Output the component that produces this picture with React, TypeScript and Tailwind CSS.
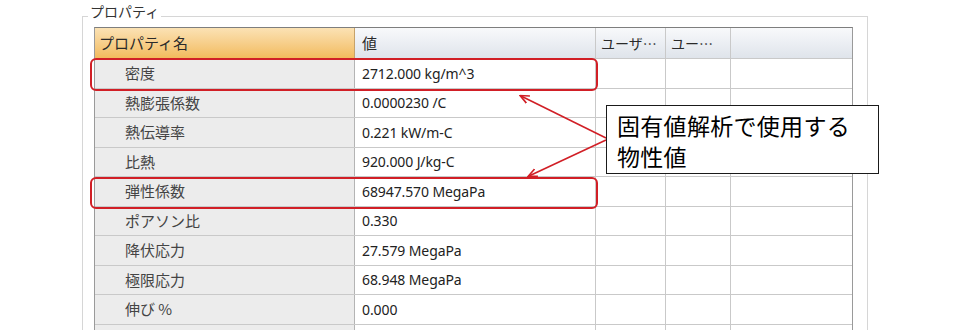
import React from "react";

const jp = "font-['Noto_Sans_CJK_JP','Noto_Sans',sans-serif]";
const num = "font-['Noto_Sans','Noto_Sans_CJK_JP',sans-serif]";

const rows: [string, string][] = [
  ["密度", "2712.000 kg/m^3"],
  ["熱膨張係数", "0.0000230 /C"],
  ["熱伝導率", "0.221 kW/m-C"],
  ["比熱", "920.000 J/kg-C"],
  ["弾性係数", "68947.570 MegaPa"],
  ["ポアソン比", "0.330"],
  ["降伏応力", "27.579 MegaPa"],
  ["極限応力", "68.948 MegaPa"],
  ["伸び %", "0.000"],
  ["", ""],
];

const PropRow = ({ name, value }: { name: string; value: string }) => (
  <div className="flex h-[29.5px] border-b border-[#c9c9c9]">
    <div
      className={`w-[260px] shrink-0 bg-[#ececec] border-r border-[#b4b4b4] pl-[30px] flex items-center text-[15px] text-[#444] ${jp}`}
    >
      {name}
    </div>
    <div
      className={`w-[241px] shrink-0 border-r border-[#c9c9c9] pl-[7px] flex items-center text-[14px] text-[#222] tracking-[-0.1px] ${num}`}
    >
      {value}
    </div>
    <div className="w-[70px] shrink-0 border-r border-[#c9c9c9]" />
    <div className="w-[65px] shrink-0 border-r border-[#c9c9c9]" />
    <div className="flex-1" />
  </div>
);

export default function App() {
  return (
    <div className="relative w-[960px] h-[330px] overflow-hidden bg-white">
      <div className="ml-[82px] mt-[16px] w-[786px] h-[330px] border border-[#d6d6d6] pl-[11px] pt-[10px]">
        <span
          className={`absolute left-[88px] top-[3px] bg-white px-[2px] text-[14px] leading-[17px] text-[#333] ${jp}`}
        >
          プロパティ
        </span>

        <div className="w-[759px] border-l border-t border-r border-[#9a9a9a] border-t-[#7e7e7e]">
          {/* header */}
          <div className={`flex h-[31px] border-b border-[#c9c9c9] text-[15px] text-[#2a2a2a] ${jp}`}>
            <div className="w-[260px] shrink-0 bg-gradient-to-b from-[#fbe2b4] to-[#f2bb5c] border-r border-[#c6a26a] pl-[4px] flex items-center">
              プロパティ名
            </div>
            <div className="flex-1 flex bg-gradient-to-b from-[#f8f9fb] to-[#dfe4eb]">
              <div className="w-[241px] shrink-0 border-r border-[#c9c9c9] pl-[7px] flex items-center">値</div>
              <div className="w-[70px] shrink-0 border-r border-[#c9c9c9] pl-[5px] flex items-center text-[14px]">
                ユーザ…
              </div>
              <div className="w-[65px] shrink-0 border-r border-[#c9c9c9] pl-[5px] flex items-center text-[14px]">
                ユー…
              </div>
              <div className="flex-1" />
            </div>
          </div>

          {rows.map(([n, v], i) => (
            <PropRow key={i} name={n} value={v} />
          ))}
        </div>
      </div>

      {/* highlighted rows */}
      <div className="absolute left-[90px] top-[58px] w-[508px] h-[33px] rounded-[6px] border-[2.5px] border-[#d11f26]" />
      <div className="absolute left-[90px] top-[177px] w-[508px] h-[32px] rounded-[6px] border-[2.5px] border-[#d11f26]" />

      {/* arrows from the note */}
      <svg className="absolute left-0 top-0" width="960" height="330">
        <defs>
          <marker id="head" markerWidth="10" markerHeight="10" refX="8" refY="5" orient="auto" markerUnits="userSpaceOnUse">
            <path d="M0,1 L9,5 L0,9" fill="none" stroke="#d11f26" strokeWidth="1.6" />
          </marker>
        </defs>
        <line x1="606" y1="138" x2="521" y2="96" stroke="#d11f26" strokeWidth="1.6" markerEnd="url(#head)" />
        <line x1="606" y1="140" x2="529" y2="176" stroke="#d11f26" strokeWidth="1.6" markerEnd="url(#head)" />
      </svg>

      {/* note */}
      <div
        className={`absolute left-[606px] top-[105px] w-[273px] h-[69px] border border-[#1a1a1a] bg-white pl-[10px] pt-[4px] text-[23px] leading-[31px] text-black tracking-[0.3px] ${jp}`}
      >
        固有値解析で使用する
        <br />
        物性値
      </div>
    </div>
  );
}
